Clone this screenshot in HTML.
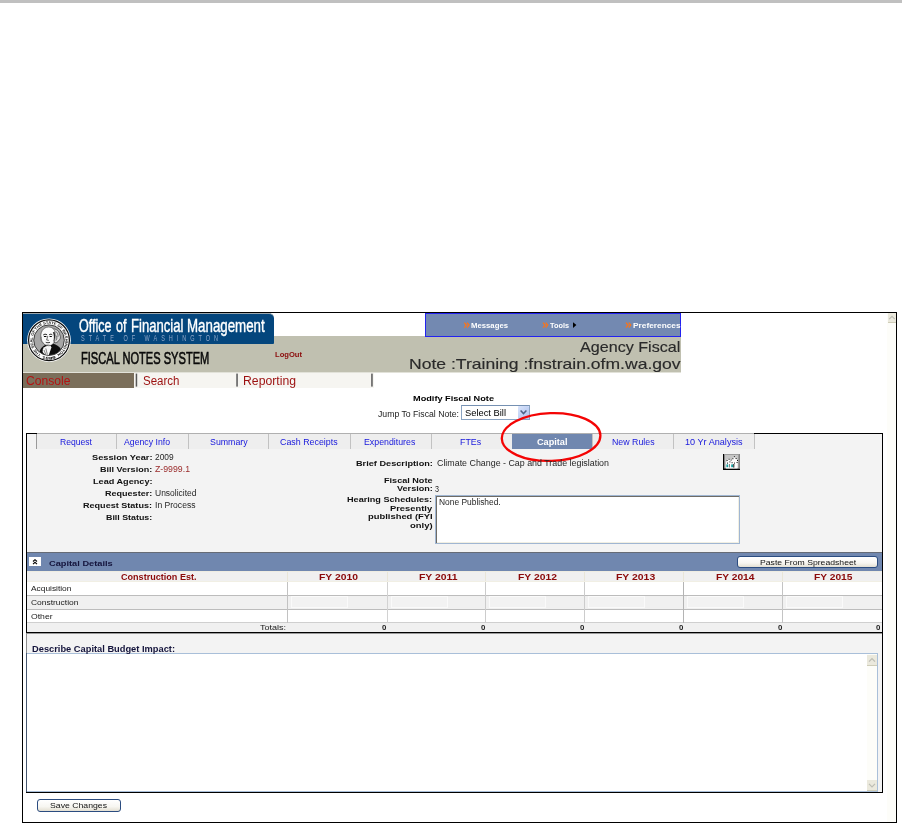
<!DOCTYPE html>
<html><head><meta charset="utf-8"><title>Fiscal Notes System</title>
<style>
html,body{margin:0;padding:0;background:#fff;}
body{position:relative;width:902px;height:823px;overflow:hidden;font-family:"Liberation Sans",sans-serif;}
div,span,svg{position:absolute;box-sizing:border-box;}
.t{white-space:nowrap;line-height:1;font-family:"Liberation Sans",sans-serif;transform-origin:0 50%;}
.tab{top:434px;height:15px;background:#eeeeee;border-left:1px solid #c2c2c2;}
.vs{top:571px;height:52px;width:1px;background:#c6c6c6;}
.hl{left:27px;width:855px;height:1px;background:#bcbcbc;}
.inp{top:596px;height:12px;width:57px;border:1px solid #fafafa;background:#f2f2f2;}
.btn{border:1px solid #2b4c80;border-radius:3px;background:linear-gradient(#ffffff 0%,#f7f6f1 60%,#e3dfd2 100%);}

</style></head>
<body>
<!-- top gray strip -->
<div style="left:0;top:0;width:902px;height:3px;background:#c0c0c0"></div>

<!-- outer frame -->
<div style="left:22px;top:312px;width:875px;height:511px;border:1px solid #000;background:#fff"></div>
<!-- outer scrollbar -->
<div style="left:887px;top:313px;width:9px;height:509px;background:#fdfdf9"></div>
<div style="left:888px;top:313px;width:8px;height:10px;background:#ebe9dd;border-bottom:1px solid #cfcdb8"></div>
<svg style="left:888px;top:313px" width="8" height="10" viewBox="0 0 8 10"><path d="M1.2 6.2 L4 3.4 L6.8 6.2" fill="none" stroke="#bdbdb4" stroke-width="1.2"/></svg>

<!-- gray band -->
<div style="left:23px;top:336px;width:658px;height:36px;background:#c0c0b0"></div>
<div style="left:23px;top:372px;width:658px;height:1px;background:#e2e2d9"></div>
<!-- messages bar -->
<div style="left:425px;top:313px;width:256px;height:24px;background:#7389b1;border:1px solid #2222f0"></div>
<!-- blue logo box -->
<div style="left:23px;top:313px;width:251px;height:31px;background:#04467d;border-radius:0 5px 1px 0;border-top:1px solid #9aa7ae"></div>
<!-- seal -->
<svg style="left:27px;top:318px;filter:grayscale(1)" width="44" height="45" viewBox="0 0 44 45">
  <defs>
    <path id="arcT" d="M13.85 36.32 A16.3 16.3 0 1 1 30.15 36.32"/>
    <path id="arcB" d="M14.73 40.19 A19.4 19.4 0 0 0 29.27 40.19"/>
    <clipPath id="inC"><circle cx="22" cy="22.2" r="14.9"/></clipPath>
  </defs>
  <circle cx="22" cy="22.2" r="21.8" fill="#ffffff"/>
  <circle cx="22" cy="22.2" r="20.4" fill="#fdfdfd" stroke="#0c0c0c" stroke-width="1.2"/>
  <circle cx="22" cy="22.2" r="15.3" fill="#a6a6a6" stroke="#1a1a1a" stroke-width="0.8"/>
  <text font-family="Liberation Sans, sans-serif" font-weight="bold" font-size="3.7" fill="#101010"><textPath href="#arcT" textLength="84.8" lengthAdjust="spacingAndGlyphs">THE SEAL OF THE STATE OF WASHINGTON</textPath></text>
  <text font-family="Liberation Sans, sans-serif" font-weight="bold" font-size="3.7" fill="#101010"><textPath href="#arcB" textLength="14.6" lengthAdjust="spacingAndGlyphs">1889</textPath></text>
  <g clip-path="url(#inC)">
  <!-- coat -->
  <path d="M12.6 33.4 C13.6 30 16 27.8 19 26.8 L25.6 25.4 C29.6 26.4 33 28.6 34.4 32 C32 36.4 27 38 22 38 C18 38 14.6 36.4 12.6 33.4 Z" fill="#0e0e0e"/>
  <!-- cravat / shirt -->
  <path d="M15.8 31 C17.4 28.6 20.2 27.6 23.6 27.6 L24.4 29.4 L21.6 37.6 C19 37.2 16.8 35.8 15.6 34 Z" fill="#f6f6f6"/>
  <path d="M18.8 30.4 L20.4 36.6 M17 32 L18.6 36" stroke="#3a3a3a" stroke-width="0.6" fill="none"/>
  <g transform="translate(21 20) scale(1.13) translate(-21 -20.6)">
  <!-- right hair mass -->
  <path d="M24.6 12.4 C28.4 12.2 31 14.6 31.4 17.8 C32.6 19.6 32 22 30.4 22.8 C30 24.4 28 25.2 26.4 24.4 Z" fill="#dedede" stroke="#1c1c1c" stroke-width="0.5"/>
  <path d="M27.6 14.6 C29.4 15.6 30.2 17.6 29.8 19.6 M28.2 18.4 C29.2 19.8 29 21.6 28 22.8" stroke="#2a2a2a" stroke-width="0.55" fill="none"/>
  <!-- head (face + left hair) -->
  <path d="M14.8 21.4 C13.8 15.6 16.6 10.9 21.6 10.9 C25 10.9 27 13 27.2 16 C27.4 19 27.2 22 26.4 24.4 C25.4 26.6 23.2 27.6 21.2 27.4 C19.4 27.2 17.6 26.4 16.6 25 C15.4 24.6 14.9 23 14.8 21.4 Z" fill="#fafafa" stroke="#1c1c1c" stroke-width="0.45"/>
  <!-- shadow between face and hair -->
  <path d="M25.2 15.6 C26.4 17.6 26.6 21 25.6 24.4 C27.4 22.4 27.8 18.4 26.8 15.4 Z" fill="#2a2a2a"/>
  <!-- left hair curls -->
  <path d="M15 19.4 C14.8 21.6 15.4 23.6 16.8 25" stroke="#6a6a6a" stroke-width="0.7" fill="none"/>
  <!-- brows/eyes/nose/mouth -->
  <path d="M16.8 17.9 C17.8 17.1 19.2 17.1 20.2 17.8 M22 17.8 C22.8 17.1 24 17.1 24.8 17.8" stroke="#0a0a0a" stroke-width="0.85" fill="none"/>
  <path d="M17.4 19.2 h2.2 M22.4 19.2 h2" stroke="#000" stroke-width="0.9"/>
  <path d="M20.8 18.8 L19.8 22.4 L21.8 22.7" stroke="#2a2a2a" stroke-width="0.6" fill="none"/>
  <path d="M19 24.4 C20.2 24.9 21.8 24.9 22.8 24.4" stroke="#151515" stroke-width="0.75" fill="none"/>
  <path d="M19.6 26.2 C20.6 26.6 21.6 26.6 22.4 26.2" stroke="#8a8a8a" stroke-width="0.5" fill="none"/>
  </g>
  </g>
</svg>

<!-- nav -->
<div style="left:23px;top:373px;width:111px;height:15px;background:#7b6f5b"></div>
<div style="left:134px;top:373px;width:240px;height:15px;background:#f6f5f1"></div>
<svg style="left:0;top:0" width="902" height="823" viewBox="0 0 902 823">
  <rect x="135.7" y="373.6" width="1.5" height="13" fill="#585858"/>
  <rect x="236.3" y="373.6" width="1.5" height="13" fill="#585858"/>
  <rect x="371.2" y="373.6" width="1.5" height="13" fill="#585858"/>
  <!-- orange chevrons -->
  <g fill="none" stroke="#ff7414" stroke-width="1.25">
    <path d="M464.3 322.6 l2 2.5 l-2 2.5 M467 322.6 l2 2.5 l-2 2.5"/>
    <path d="M543 322.6 l2 2.5 l-2 2.5 M545.7 322.6 l2 2.5 l-2 2.5"/>
    <path d="M626 322.6 l2 2.5 l-2 2.5 M628.7 322.6 l2 2.5 l-2 2.5"/>
  </g>
  <path d="M573 322.2 L576.4 325.1 L573 328 Z" fill="#000"/>
</svg>

<!-- select -->
<div style="left:461px;top:405px;width:69px;height:15px;background:#fff;border:1px solid #8aa3c2;border-top-color:#7590b2"></div>
<div style="left:518px;top:406px;width:11px;height:13px;background:linear-gradient(135deg,#dbe5fb 0%,#c2d2f5 50%,#b4c6ef 100%);border-radius:1px"></div>
<svg style="left:518px;top:406px" width="11" height="13" viewBox="0 0 11 13"><path d="M2.6 4.6 L5.5 7.6 L8.4 4.6" fill="none" stroke="#4d6185" stroke-width="1.5"/></svg>

<!-- panel -->
<div style="left:26px;top:433px;width:857px;height:360px;background:#f3f3f3;border:1px solid #000;border-top-color:#b0b0b0"></div>
<div style="left:26px;top:433px;width:11px;height:1px;background:#000"></div>
<div style="left:754px;top:433px;width:129px;height:1px;background:#000"></div>
<!-- tabs -->
<div class="tab" style="left:36px;width:80px;border-left-color:#9a9a9a"></div>
<div class="tab" style="left:116px;width:72px"></div>
<div class="tab" style="left:188px;width:80px"></div>
<div class="tab" style="left:268px;width:82px"></div>
<div class="tab" style="left:350px;width:81px"></div>
<div class="tab" style="left:431px;width:81px"></div>
<div class="tab" style="left:512px;width:80px;background:#7087af;border-left-color:#7087af"></div>
<div class="tab" style="left:592px;width:81px"></div>
<div class="tab" style="left:673px;width:82px;border-right:1px solid #c2c2c2"></div>

<!-- home icon -->
<svg style="left:723px;top:454px" width="17" height="16" viewBox="0 0 17 16" shape-rendering="auto">
  <rect x="0" y="0" width="17" height="16" fill="#c6c6c6"/>
  <rect x="0" y="0" width="1.3" height="16" fill="#000"/>
  <rect x="0" y="14.5" width="17" height="1.5" fill="#000"/>
  <rect x="15.4" y="0" width="1.6" height="14.5" fill="#858585"/>
  <rect x="1.3" y="0" width="14.1" height="0.9" fill="#9a9a9a"/>
  <path d="M3 14.5 V8.6 L4.4 5.6 L6.8 5 L8.8 6 L11.4 2.4 L14.6 6.6 V14.5 Z" fill="#fdfdfd"/>
  <g fill="#111">
    <rect x="3.6" y="6" width="1" height="1"/><rect x="5.6" y="4.8" width="1" height="1"/><rect x="7.6" y="5.6" width="1" height="1"/>
    <rect x="9.4" y="4.2" width="1" height="1"/><rect x="10.9" y="2.2" width="1" height="1"/><rect x="12.6" y="4" width="1" height="1"/>
    <rect x="14" y="6" width="1" height="1"/><rect x="4" y="8.6" width="1" height="1"/><rect x="6.4" y="7.4" width="1" height="1"/>
    <rect x="11" y="8.6" width="1" height="1"/><rect x="13.6" y="8" width="1" height="1"/><rect x="8.6" y="8.2" width="1" height="1"/>
  </g>
  <rect x="3.4" y="10.4" width="1.8" height="2.8" fill="#16a0a0"/>
  <rect x="8.2" y="10.4" width="1.8" height="2.8" fill="#16a0a0"/>
  <rect x="10.3" y="10" width="1" height="3.6" fill="#111"/>
  <rect x="6" y="10" width="0.8" height="3.4" fill="#666"/>
</svg>

<!-- hearing textarea -->
<div style="left:435px;top:495px;width:305px;height:49px;background:#fff;border:1px solid #a0b6d2;box-shadow:inset 1px 1px 0 #6e6c66, inset -1px -1px 0 #f1efe2"></div>

<!-- capital details band -->
<div style="left:27px;top:552px;width:855px;height:19px;background:#7087af;border-top:1px solid #666b75"></div>
<div style="left:29px;top:557px;width:12px;height:9px;background:#fff"></div>
<svg style="left:29px;top:557px" width="12" height="9" viewBox="0 0 12 9"><path d="M4 4.5 L6 2.7 L8 4.5 M4 7.1 L6 5.3 L8 7.1" fill="none" stroke="#000" stroke-width="1.1"/></svg>
<div class="btn" style="left:737px;top:556px;width:141px;height:12px"></div>

<!-- table -->
<div style="left:27px;top:571px;width:855px;height:11px;background:#f0f0f0"></div>
<div style="left:27px;top:582px;width:855px;height:13px;background:#fff"></div>
<div style="left:27px;top:596px;width:855px;height:13px;background:#f0f0f0"></div>
<div style="left:27px;top:610px;width:855px;height:12px;background:#fff"></div>
<div style="left:27px;top:623px;width:855px;height:9px;background:#f0f0f0"></div>
<div class="hl" style="top:595px"></div>
<div class="hl" style="top:609px"></div>
<div class="hl" style="top:622px;background:#cfcfcf"></div>
<div style="left:27px;top:632px;width:855px;height:1px;background:#000"></div>
<div style="left:27px;top:633px;width:855px;height:1px;background:#9a9a9a"></div>
<div class="inp" style="left:291px"></div><div class="inp" style="left:391px"></div><div class="inp" style="left:489px"></div><div class="inp" style="left:588px"></div><div class="inp" style="left:687px"></div><div class="inp" style="left:786px"></div>
<div class="vs" style="left:287px;background:#c2c2c2"></div><div class="vs" style="left:387px;background:#d2d2d2"></div><div class="vs" style="left:485px;background:#cccccc"></div><div class="vs" style="left:584px;background:#cccccc"></div><div class="vs" style="left:683px;background:#b4b4b4"></div><div class="vs" style="left:782px;background:#c4c4c4"></div>
<div style="left:287px;top:571px;width:1px;height:11px;background:#e9e6d8"></div><div style="left:387px;top:571px;width:1px;height:11px;background:#e9e6d8"></div><div style="left:485px;top:571px;width:1px;height:11px;background:#e9e6d8"></div><div style="left:584px;top:571px;width:1px;height:11px;background:#e9e6d8"></div><div style="left:683px;top:571px;width:1px;height:11px;background:#e9e6d8"></div><div style="left:782px;top:571px;width:1px;height:11px;background:#e9e6d8"></div><div style="left:27px;top:571px;width:855px;height:1px;background:#efede2"></div><div style="left:27px;top:581px;width:855px;height:1px;background:#f1efe4"></div>

<!-- big textarea -->
<div style="left:27px;top:653px;width:851px;height:139px;background:#fff;border:1px solid #a9bfd9;border-left:none"></div>
<div style="left:867px;top:654px;width:10px;height:137px;background:#fdfdf9"></div>
<div style="left:867px;top:655px;width:10px;height:11px;background:#ebe9dd;border-bottom:1px solid #cfcdb8"></div>
<svg style="left:867px;top:655px" width="10" height="11" viewBox="0 0 10 11"><path d="M2 6.6 L5 3.6 L8 6.6" fill="none" stroke="#bdbdb4" stroke-width="1.2"/></svg>
<div style="left:867px;top:780px;width:10px;height:11px;background:#ebe9dd;border-bottom:1px solid #cfcdb8"></div>
<svg style="left:867px;top:780px" width="10" height="11" viewBox="0 0 10 11"><path d="M2 3.8 L5 6.8 L8 3.8" fill="none" stroke="#bdbdb4" stroke-width="1.2"/></svg>

<div style="left:26px;top:633px;width:1px;height:20px;background:#8c8c8c"></div>
<div style="left:26px;top:653px;width:1px;height:139px;background:#46566e"></div>
<!-- save button -->
<div class="btn" style="left:37px;top:799px;width:84px;height:13px"></div>

<!-- red ellipse annotation -->
<svg style="left:0;top:0" width="902" height="823" viewBox="0 0 902 823">
  <ellipse cx="551.1" cy="437" rx="49.3" ry="23.9" fill="none" stroke="#f40404" stroke-width="2.3" transform="rotate(-2 551.1 437)"/>
</svg>

<span class="t" style="left:78.80px;top:318.00px;font-size:17.6px;font-weight:normal;color:#ffffff;transform:scaleX(0.7143);-webkit-text-stroke:0.4px #ffffff;">Office</span>
<span class="t" style="left:116.10px;top:318.00px;font-size:17.6px;font-weight:normal;color:#ffffff;transform:scaleX(0.7149);-webkit-text-stroke:0.4px #ffffff;">of</span>
<span class="t" style="left:131.00px;top:318.00px;font-size:17.6px;font-weight:normal;color:#ffffff;transform:scaleX(0.7441);-webkit-text-stroke:0.4px #ffffff;">Financial</span>
<span class="t" style="left:186.90px;top:318.00px;font-size:17.6px;font-weight:normal;color:#ffffff;transform:scaleX(0.7565);-webkit-text-stroke:0.4px #ffffff;">Management</span>
<span class="t" style="left:80.50px;top:334.01px;font-size:8.4px;font-weight:normal;color:#8fa6c8;letter-spacing:6.027px;transform:scaleX(0.660);">STATE OF WASHINGTON</span>
<span class="t" style="left:81.00px;top:350.00px;font-size:17px;font-weight:normal;color:#0a0a0a;transform:scaleX(0.6519);-webkit-text-stroke:0.6px #0a0a0a;">FISCAL NOTES SYSTEM</span>
<span class="t" style="left:275.00px;top:351.00px;font-size:7.4px;font-weight:bold;color:#8b0a0a;transform:scaleX(1.0273);">LogOut</span>
<span class="t" style="left:26.00px;top:375.01px;font-size:12.0px;font-weight:normal;color:#b41212;transform:scaleX(1.0106);">Console</span>
<span class="t" style="left:142.50px;top:375.01px;font-size:12.0px;font-weight:normal;color:#9c1010;transform:scaleX(0.9597);">Search</span>
<span class="t" style="left:243.00px;top:375.01px;font-size:12.0px;font-weight:normal;color:#9c1010;transform:scaleX(1.0186);">Reporting</span>
<span class="t" style="left:471.00px;top:322.00px;font-size:7.2px;font-weight:bold;color:#ffffff;transform:scaleX(1.0764);">Messages</span>
<span class="t" style="left:550.00px;top:322.00px;font-size:7.2px;font-weight:bold;color:#ffffff;transform:scaleX(1.0193);">Tools</span>
<span class="t" style="left:633.00px;top:322.00px;font-size:7.2px;font-weight:bold;color:#ffffff;transform:scaleX(1.1566);">Preferences</span>
<span class="t" style="left:580.00px;top:340.00px;font-size:14.8px;font-weight:normal;color:#2a2a2a;transform:scaleX(1.0889);-webkit-text-stroke:0.15px #2a2a2a;">Agency Fiscal</span>
<span class="t" style="left:409.00px;top:357.00px;font-size:14.8px;font-weight:normal;color:#2a2a2a;transform:scaleX(1.1865);-webkit-text-stroke:0.15px #2a2a2a;">Note :Training :fnstrain.ofm.wa.gov</span>
<span class="t" style="left:413.00px;top:395.00px;font-size:7.6px;font-weight:bold;color:#000;transform:scaleX(1.2073);">Modify Fiscal Note</span>
<span class="t" style="left:377.70px;top:411.01px;font-size:8.2px;font-weight:normal;color:#222;transform:scaleX(1.0603);">Jump To Fiscal Note:</span>
<span class="t" style="left:465.00px;top:408.01px;font-size:9.5px;font-weight:normal;color:#000;transform:scaleX(0.9828);">Select Bill</span>
<span class="t" style="left:60.00px;top:437.00px;font-size:9.8px;font-weight:normal;color:#1616dc;transform:scaleX(0.8767);">Request</span>
<span class="t" style="left:124.00px;top:437.00px;font-size:9.8px;font-weight:normal;color:#1616dc;transform:scaleX(0.8889);">Agency Info</span>
<span class="t" style="left:209.70px;top:437.00px;font-size:9.8px;font-weight:normal;color:#1616dc;transform:scaleX(0.8993);">Summary</span>
<span class="t" style="left:279.70px;top:437.00px;font-size:9.8px;font-weight:normal;color:#1616dc;transform:scaleX(0.9040);">Cash Receipts</span>
<span class="t" style="left:364.40px;top:437.00px;font-size:9.8px;font-weight:normal;color:#1616dc;transform:scaleX(0.8970);">Expenditures</span>
<span class="t" style="left:460.30px;top:437.00px;font-size:9.8px;font-weight:normal;color:#1616dc;transform:scaleX(0.9015);">FTEs</span>
<span class="t" style="left:536.50px;top:438.02px;font-size:8.3px;font-weight:bold;color:#ffffff;transform:scaleX(1.1022);">Capital</span>
<span class="t" style="left:611.60px;top:437.00px;font-size:9.8px;font-weight:normal;color:#1616dc;transform:scaleX(0.8992);">New Rules</span>
<span class="t" style="left:684.70px;top:437.00px;font-size:9.8px;font-weight:normal;color:#1616dc;transform:scaleX(0.9304);">10 Yr Analysis</span>
<span class="t" style="left:91.50px;top:454.02px;font-size:7.9px;font-weight:bold;color:#111;transform:scaleX(1.1719);">Session Year:</span>
<span class="t" style="left:99.80px;top:466.02px;font-size:7.9px;font-weight:bold;color:#111;transform:scaleX(1.1445);">Bill Version:</span>
<span class="t" style="left:92.50px;top:478.01px;font-size:7.9px;font-weight:bold;color:#111;transform:scaleX(1.1564);">Lead Agency:</span>
<span class="t" style="left:104.80px;top:490.02px;font-size:7.9px;font-weight:bold;color:#111;transform:scaleX(1.1451);">Requester:</span>
<span class="t" style="left:83.00px;top:502.02px;font-size:7.9px;font-weight:bold;color:#111;transform:scaleX(1.1485);">Request Status:</span>
<span class="t" style="left:105.80px;top:514.02px;font-size:7.9px;font-weight:bold;color:#111;transform:scaleX(1.1208);">Bill Status:</span>
<span class="t" style="left:155.00px;top:453.01px;font-size:8.3px;font-weight:normal;color:#262626;transform:scaleX(1.0071);">2009</span>
<span class="t" style="left:155.00px;top:465.01px;font-size:8.3px;font-weight:normal;color:#9a2a2a;transform:scaleX(1.0536);">Z-9999.1</span>
<span class="t" style="left:155.00px;top:489.01px;font-size:8.3px;font-weight:normal;color:#262626;transform:scaleX(1.0223);">Unsolicited</span>
<span class="t" style="left:155.00px;top:501.01px;font-size:8.3px;font-weight:normal;color:#262626;transform:scaleX(1.0331);">In Process</span>
<span class="t" style="left:355.50px;top:460.01px;font-size:7.9px;font-weight:bold;color:#111;transform:scaleX(1.1613);">Brief Description:</span>
<span class="t" style="left:437.00px;top:459.02px;font-size:8.3px;font-weight:normal;color:#262626;transform:scaleX(1.0685);">Climate Change - Cap and Trade legislation</span>
<span class="t" style="left:383.90px;top:477.00px;font-size:7.9px;font-weight:bold;color:#111;transform:scaleX(1.1518);">Fiscal Note</span>
<span class="t" style="left:396.50px;top:485.01px;font-size:7.9px;font-weight:bold;color:#111;transform:scaleX(1.1528);">Version:</span>
<span class="t" style="left:435.00px;top:485.01px;font-size:8.3px;font-weight:normal;color:#262626;transform:scaleX(0.8649);">3</span>
<span class="t" style="left:347.30px;top:496.01px;font-size:7.9px;font-weight:bold;color:#111;transform:scaleX(1.1551);">Hearing Schedules:</span>
<span class="t" style="left:390.30px;top:505.01px;font-size:7.9px;font-weight:bold;color:#111;transform:scaleX(1.1849);">Presently</span>
<span class="t" style="left:367.70px;top:513.01px;font-size:7.9px;font-weight:bold;color:#111;transform:scaleX(1.1902);">published (FYI</span>
<span class="t" style="left:409.80px;top:522.00px;font-size:7.9px;font-weight:bold;color:#111;transform:scaleX(1.1983);">only)</span>
<span class="t" style="left:438.60px;top:498.01px;font-size:8.3px;font-weight:normal;color:#262626;transform:scaleX(1.0133);">None Published.</span>
<span class="t" style="left:49.30px;top:560.00px;font-size:7.6px;font-weight:bold;color:#14143c;transform:scaleX(1.2170);">Capital Details</span>
<span class="t" style="left:759.50px;top:559.02px;font-size:7.9px;font-weight:normal;color:#111;transform:scaleX(1.0967);">Paste From Spreadsheet</span>
<span class="t" style="left:121.40px;top:573.00px;font-size:8.4px;font-weight:bold;color:#8b0a0a;transform:scaleX(1.0817);">Construction Est.</span>
<span class="t" style="left:319.00px;top:573.00px;font-size:8.4px;font-weight:bold;color:#8b0a0a;transform:scaleX(1.2375);">FY 2010</span>
<span class="t" style="left:418.70px;top:573.00px;font-size:8.4px;font-weight:bold;color:#8b0a0a;transform:scaleX(1.2433);">FY 2011</span>
<span class="t" style="left:517.80px;top:573.00px;font-size:8.4px;font-weight:bold;color:#8b0a0a;transform:scaleX(1.2343);">FY 2012</span>
<span class="t" style="left:616.00px;top:573.00px;font-size:8.4px;font-weight:bold;color:#8b0a0a;transform:scaleX(1.2438);">FY 2013</span>
<span class="t" style="left:715.50px;top:573.00px;font-size:8.4px;font-weight:bold;color:#8b0a0a;transform:scaleX(1.2216);">FY 2014</span>
<span class="t" style="left:814.30px;top:573.00px;font-size:8.4px;font-weight:bold;color:#8b0a0a;transform:scaleX(1.2216);">FY 2015</span>
<span class="t" style="left:31.00px;top:585.01px;font-size:7.3px;font-weight:normal;color:#202020;transform:scaleX(1.1446);">Acquisition</span>
<span class="t" style="left:31.00px;top:599.01px;font-size:7.3px;font-weight:normal;color:#202020;transform:scaleX(1.1570);">Construction</span>
<span class="t" style="left:31.00px;top:613.00px;font-size:7.3px;font-weight:normal;color:#202020;transform:scaleX(1.1836);">Other</span>
<span class="t" style="left:260.40px;top:624.02px;font-size:7.0px;font-weight:normal;color:#202020;transform:scaleX(1.2899);">Totals:</span>
<span class="t" style="left:382.10px;top:625.01px;font-size:6.9px;font-weight:bold;color:#222;transform:scaleX(1.1447);">0</span>
<span class="t" style="left:481.20px;top:625.01px;font-size:6.9px;font-weight:bold;color:#222;transform:scaleX(1.1447);">0</span>
<span class="t" style="left:580.20px;top:625.01px;font-size:6.9px;font-weight:bold;color:#222;transform:scaleX(1.1447);">0</span>
<span class="t" style="left:679.00px;top:625.01px;font-size:6.9px;font-weight:bold;color:#222;transform:scaleX(1.1447);">0</span>
<span class="t" style="left:777.60px;top:625.01px;font-size:6.9px;font-weight:bold;color:#222;transform:scaleX(1.1447);">0</span>
<span class="t" style="left:876.30px;top:625.01px;font-size:6.9px;font-weight:bold;color:#222;transform:scaleX(1.1447);">0</span>
<span class="t" style="left:32.20px;top:645.00px;font-size:8.4px;font-weight:bold;color:#14143c;transform:scaleX(1.1092);">Describe Capital Budget Impact:</span>
<span class="t" style="left:50.00px;top:802.00px;font-size:7.9px;font-weight:normal;color:#111;transform:scaleX(1.1011);">Save Changes</span>
</body></html>
